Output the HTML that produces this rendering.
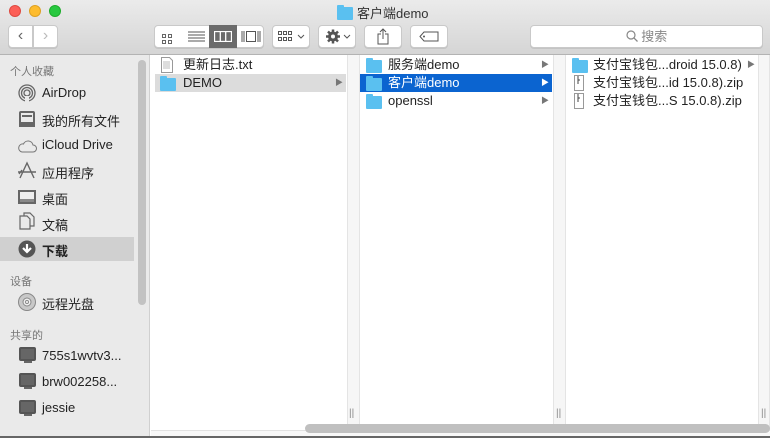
<!DOCTYPE html>
<html><head><meta charset="utf-8"><style>
*{margin:0;padding:0;box-sizing:border-box}
body{width:770px;height:438px;overflow:hidden;font-family:"Liberation Sans","Noto Sans CJK SC",sans-serif;font-size:13px;color:#222;background:#fff;position:relative}
.a{position:absolute}
#tb{left:0;top:0;width:770px;height:55px;background:linear-gradient(#ebebeb,#d5d5d5);border-bottom:1px solid #b3b3b3}
.dot{width:12px;height:12px;border-radius:50%;top:5px}
.btn{background:#fff;border:1px solid #c9c9c9;border-radius:4px;height:23px;top:25px;box-shadow:0 1px 0 #c4c4c4}
#sb{left:0;top:55px;width:150px;height:383px;background:#eaeaea;border-right:1px solid #d0d0d0}
.h{left:10px;font-size:11px;color:#777}
.it{left:42px;font-size:13px;color:#222}
.ic{left:18px;width:17px;height:17px}
.fold{width:16px;height:13px;background:#5ac0f0;border-radius:1px}
.fold:before{content:"";position:absolute;left:0;top:-2px;width:7px;height:3px;background:#5ac0f0;border-radius:1px 1px 0 0}
.col{top:55px;height:375px;background:#fff}
.gap{top:55px;height:375px;background:#f6f6f6;border-left:1px solid #e4e4e4;border-right:1px solid #e4e4e4}
.row{height:18px;line-height:18px;font-size:13px}
.arr{font-size:8px;color:#777}
.grip{font-size:10px;color:#888;top:408px}
.mon{width:17px;height:14px;background:#666;border-radius:2px;border:2px solid #555}
</style></head><body>
<div id="tb" class="a">
<div class="a dot" style="left:9px;background:#fc5f57;border:1px solid #de4a41"></div>
<div class="a dot" style="left:29px;background:#fdbc2e;border:1px solid #dea123"></div>
<div class="a dot" style="left:49px;background:#28c840;border:1px solid #1dad2b"></div>
<div class="a fold" style="left:337px;top:7px"></div>
<div class="a" style="left:357px;top:3px;font-size:13px;color:#333">客户端demo</div>
<div class="a btn" style="left:8px;width:25px;font-size:16px;color:#666;text-align:center;line-height:20px;border-radius:4px 0 0 4px">&#8249;</div>
<div class="a btn" style="left:33px;width:25px;font-size:16px;color:#bbb;text-align:center;line-height:20px;border-radius:0 4px 4px 0">&#8250;</div>
<div class="a btn" style="left:154px;width:110px"></div>
<div class="a" style="left:162px;top:32px;width:10px;height:10px;background:
linear-gradient(90deg,transparent 0,transparent 100%);border:0">
<svg width="10" height="10"><g fill="none" stroke="#666"><rect x="0.5" y="0.5" width="3" height="3"/><rect x="6.5" y="0.5" width="3" height="3"/><rect x="0.5" y="6.5" width="3" height="3"/><rect x="6.5" y="6.5" width="3" height="3"/></g></svg></div>
<svg class="a" style="left:188px;top:31px" width="17" height="11"><g stroke="#555"><line x1="0" y1="1" x2="17" y2="1"/><line x1="0" y1="4" x2="17" y2="4"/><line x1="0" y1="7" x2="17" y2="7"/><line x1="0" y1="10" x2="17" y2="10"/></g></svg>
<div class="a" style="left:209px;top:25px;width:28px;height:23px;background:#6b6b6b"></div>
<svg class="a" style="left:214px;top:31px" width="18" height="11"><g fill="none" stroke="#fff" stroke-width="1.3"><rect x="0.5" y="0.5" width="17" height="10"/><line x1="6.3" y1="0" x2="6.3" y2="11"/><line x1="11.7" y1="0" x2="11.7" y2="11"/></g></svg>
<svg class="a" style="left:241px;top:31px" width="20" height="11"><g fill="none" stroke="#555"><rect x="5.5" y="0.5" width="9" height="10"/><line x1="1" y1="0" x2="1" y2="11"/><line x1="3" y1="0" x2="3" y2="11"/><line x1="17" y1="0" x2="17" y2="11"/><line x1="19" y1="0" x2="19" y2="11"/></g></svg>
<div class="a btn" style="left:272px;width:38px"></div>
<svg class="a" style="left:278px;top:31px" width="28" height="11"><g fill="none" stroke="#555"><rect x=".5" y=".5" width="3" height="3"/><rect x="5.5" y=".5" width="3" height="3"/><rect x="10.5" y=".5" width="3" height="3"/><rect x=".5" y="6.5" width="3" height="3"/><rect x="5.5" y="6.5" width="3" height="3"/><rect x="10.5" y="6.5" width="3" height="3"/><path d="M20 4l3 3 3-3"/></g></svg>
<div class="a btn" style="left:318px;width:38px"></div>
<svg class="a" style="left:326px;top:29px" width="26" height="15"><g fill="#555"><circle cx="7" cy="7.5" r="5"/><g stroke="#555" stroke-width="2.5"><line x1="7" y1="0.5" x2="7" y2="14.5"/><line x1="0" y1="7.5" x2="14" y2="7.5"/><line x1="2" y1="2.5" x2="12" y2="12.5"/><line x1="12" y1="2.5" x2="2" y2="12.5"/></g><circle cx="7" cy="7.5" r="2" fill="#fff"/></g><path d="M18 6l3 3 3-3" fill="none" stroke="#555"/></svg>
<div class="a btn" style="left:364px;width:38px"></div>
<svg class="a" style="left:377px;top:28px" width="12" height="17"><g fill="none" stroke="#555"><path d="M4 6H1v10h10V6H8"/><path d="M6 1v10M3 4l3-3 3 3"/></g></svg>
<div class="a btn" style="left:410px;width:38px"></div>
<svg class="a" style="left:419px;top:31px" width="20" height="11"><path d="M1 5.5L5 1h14v9H5z" fill="none" stroke="#555"/><circle cx="5" cy="5.5" r="1" fill="#555"/></svg>
<div class="a btn" style="left:530px;width:233px;text-align:center;color:#888;font-size:13px;line-height:21px">
<svg width="12" height="12" style="vertical-align:-1px"><circle cx="5" cy="5" r="4" fill="none" stroke="#888" stroke-width="1.2"/><line x1="8" y1="8" x2="11.5" y2="11.5" stroke="#888" stroke-width="1.3"/></svg> 搜索</div>
</div>

<div id="sb" class="a">
<div class="a" style="left:138px;top:5px;width:8px;height:245px;background:#c2c2c2;border-radius:4px"></div>
<div class="a h" style="top:8px">个人收藏</div>
<div class="a" style="left:0;top:182px;width:134px;height:24px;background:#d0d0d0"></div>
<svg class="a" style="left:18px;top:29px" width="18" height="18"><g fill="none" stroke="#666" stroke-width="1.3"><circle cx="9" cy="9" r="8"/><circle cx="9" cy="9" r="5.5"/><circle cx="9" cy="9" r="3"/></g><rect x="7" y="12" width="4" height="6" fill="#eaeaea"/></svg>
<div class="a it" style="top:30px">AirDrop</div>
<div class="a" style="left:19px;top:56px;width:16px;height:16px;border:2px solid #666;border-radius:2px;background:#eaeaea"><div style="margin:2px 1px;height:2px;border-top:1px solid #666;border-bottom:1px solid #666"></div><div style="position:absolute;left:-2px;bottom:-2px;width:16px;height:5px;background:#666"></div></div>
<div class="a it" style="top:56px">我的所有文件</div>
<svg class="a" style="left:17px;top:85px" width="20" height="13"><path d="M5 12h11a3.5 3.5 0 0 0 0-7 5 5 0 0 0-9.5-1A4 4 0 0 0 5 12z" fill="none" stroke="#777"/></svg>
<div class="a it" style="top:82px">iCloud Drive</div>
<svg class="a" style="left:17px;top:106px" width="20" height="18"><g fill="none" stroke="#666" stroke-width="1.4"><path d="M3 17L10 2l7 15M1 11h18M5 9l-3 4"/></g></svg>
<div class="a it" style="top:108px">应用程序</div>
<div class="a" style="left:18px;top:135px;width:18px;height:14px;border:2px solid #666;background:#eee"><div style="position:absolute;left:0;bottom:0;width:14px;height:3px;background:#888"></div></div>
<div class="a it" style="top:134px">桌面</div>
<svg class="a" style="left:19px;top:157px" width="16" height="18"><g fill="none" stroke="#666" stroke-width="1.2"><path d="M1 4h7l3 3v10H1z"/><path d="M5 4V1h6l4 4v9h-4"/></g></svg>
<div class="a it" style="top:160px">文稿</div>
<svg class="a" style="left:18px;top:185px" width="18" height="18"><circle cx="9" cy="9" r="8.5" fill="#555"/><path d="M9 4v7M5 8l4 4 4-4" stroke="#fff" stroke-width="2.2" fill="none"/></svg>
<div class="a it" style="top:186px;font-weight:bold">下载</div>
<div class="a h" style="top:218px">设备</div>
<svg class="a" style="left:18px;top:238px" width="18" height="18"><circle cx="9" cy="9" r="8.5" fill="#c8c8c8" stroke="#888"/><circle cx="9" cy="9" r="4" fill="#eee" stroke="#888"/><circle cx="9" cy="9" r="1.5" fill="#fff" stroke="#888"/></svg>
<div class="a it" style="top:239px">远程光盘</div>
<div class="a h" style="top:272px">共享的</div>
<div class="a mon" style="left:19px;top:292px"></div><div class="a" style="left:24px;top:306px;width:8px;height:2px;background:#666"></div>
<div class="a it" style="top:293px">755s1wvtv3...</div>
<div class="a mon" style="left:19px;top:318px"></div><div class="a" style="left:24px;top:332px;width:8px;height:2px;background:#666"></div>
<div class="a it" style="top:319px">brw002258...</div>
<div class="a mon" style="left:19px;top:345px"></div><div class="a" style="left:24px;top:359px;width:8px;height:2px;background:#666"></div>
<div class="a it" style="top:345px">jessie</div>
</div>

<div class="a col" style="left:151px;width:196px"></div>
<div class="a gap" style="left:347px;width:13px"></div>
<div class="a col" style="left:360px;width:193px"></div>
<div class="a gap" style="left:553px;width:13px"></div>
<div class="a col" style="left:566px;width:192px"></div>
<div class="a gap" style="left:758px;width:12px"></div>
<div class="a grip" style="left:349px">||</div>
<div class="a grip" style="left:556px">||</div>
<div class="a grip" style="left:761px">||</div>

<!-- col1 -->
<div class="a row" style="left:155px;top:56px;width:190px"><svg style="position:absolute;left:6px;top:1px" width="12" height="16"><path d="M.5.5h8l3 3v12H.5z" fill="#fff" stroke="#999"/><g stroke="#bbb"><line x1="2" y1="5" x2="9" y2="5"/><line x1="2" y1="7" x2="9" y2="7"/><line x1="2" y1="9" x2="9" y2="9"/><line x1="2" y1="11" x2="9" y2="11"/></g></svg><span style="position:absolute;left:28px">更新日志.txt</span></div>
<div class="a row" style="left:155px;top:74px;width:191px;background:#dcdcdc"><div class="a fold" style="left:5px;top:4px"></div><span style="position:absolute;left:28px">DEMO</span><span class="a arr" style="left:180px">&#9654;</span></div>
<!-- col2 -->
<div class="a row" style="left:360px;top:56px;width:192px"><div class="a fold" style="left:6px;top:4px"></div><span style="position:absolute;left:28px">服务端demo</span><span class="a arr" style="left:181px">&#9654;</span></div>
<div class="a row" style="left:360px;top:74px;width:192px;background:#0b64d0;color:#fff"><div class="a fold" style="left:6px;top:4px"></div><span style="position:absolute;left:28px">客户端demo</span><span class="a arr" style="left:181px;color:#fff">&#9654;</span></div>
<div class="a row" style="left:360px;top:92px;width:192px"><div class="a fold" style="left:6px;top:4px"></div><span style="position:absolute;left:28px">openssl</span><span class="a arr" style="left:181px">&#9654;</span></div>
<!-- col3 -->
<div class="a row" style="left:566px;top:56px;width:192px"><div class="a fold" style="left:6px;top:4px"></div><span style="position:absolute;left:27px">支付宝钱包...droid 15.0.8)</span><span class="a arr" style="left:181px">&#9654;</span></div>
<div class="a row" style="left:566px;top:74px;width:192px"><svg style="position:absolute;left:8px;top:1px" width="10" height="16"><path d="M.5.5h9v15h-9z" fill="#fff" stroke="#999"/><line x1="4" y1="1" x2="4" y2="9" stroke="#444"/><line x1="4" y1="5" x2="6" y2="5" stroke="#444"/></svg><span style="position:absolute;left:27px">支付宝钱包...id 15.0.8).zip</span></div>
<div class="a row" style="left:566px;top:92px;width:192px"><svg style="position:absolute;left:8px;top:1px" width="10" height="16"><path d="M.5.5h9v15h-9z" fill="#fff" stroke="#999"/><line x1="4" y1="1" x2="4" y2="9" stroke="#444"/><line x1="4" y1="5" x2="6" y2="5" stroke="#444"/></svg><span style="position:absolute;left:27px">支付宝钱包...S 15.0.8).zip</span></div>

<div class="a" style="left:151px;top:430px;width:619px;height:8px;background:#f8f8f8;border-top:1px solid #e2e2e2"></div>
<div class="a" style="left:305px;top:424px;width:465px;height:9px;background:#c0c0c0;border-radius:5px"></div>
<div class="a" style="left:0;top:436px;width:770px;height:2px;background:#666"></div>
</body></html>
